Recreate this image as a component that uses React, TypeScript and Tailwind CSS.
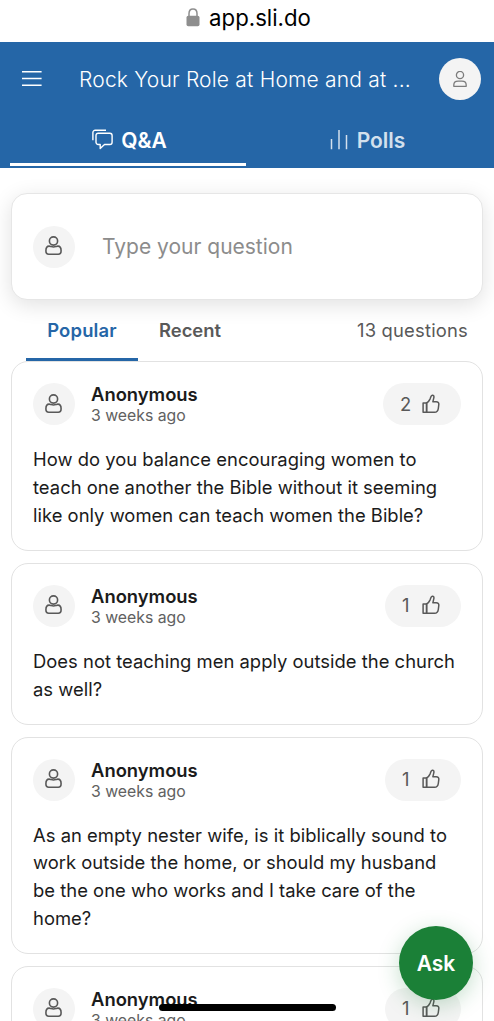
import React from 'react';
import clsx from 'clsx';

interface Question {
  id: number;
  author: string;
  time: string;
  votes: number;
  text: string;
}

const questions: Question[] = [
  {
    id: 1,
    author: 'Anonymous',
    time: '3 weeks ago',
    votes: 2,
    text: 'How do you balance encouraging women to teach one another the Bible without it seeming like only women can teach women the Bible?',
  },
  {
    id: 2,
    author: 'Anonymous',
    time: '3 weeks ago',
    votes: 1,
    text: 'Does not teaching men apply outside the church as well?',
  },
  {
    id: 3,
    author: 'Anonymous',
    time: '3 weeks ago',
    votes: 1,
    text: 'As an empty nester wife, is it biblically sound to work outside the home, or should my husband be the one who works and I take care of the home?',
  },
  {
    id: 4,
    author: 'Anonymous',
    time: '3 weeks ago',
    votes: 1,
    text: '',
  },
];

const LockIcon = () => (
  <svg width="14" height="19" viewBox="0 0 14 19" fill="none">
    <path d="M3 9V5.5C3 2.5 4.6.9 7 .9S11 2.5 11 5.5V9" stroke="#8e8e8e" strokeWidth="1.5" />
    <rect x="0.5" y="7.8" width="13" height="10.5" rx="1.8" fill="#8e8e8e" />
  </svg>
);

const MenuIcon = () => (
  <svg width="20" height="17" viewBox="0 0 20 17" stroke="#fff" strokeWidth="1.5">
    <path d="M0 .8h19.6M0 7.6h19.6M0 14.3h19.6" />
  </svg>
);

const ChatIcon = () => (
  <svg width="21" height="21" viewBox="0 0 21 21" fill="none" stroke="#fff" strokeWidth="1.4" strokeLinejoin="round">
    <path d="M14 1.2H3.200A2.300 2.300 0 0 0 .9 3.500v7.800" />
    <path d="M6.200 4.200h11.700a2.200 2.200 0 0 1 2.200 2.200v6.900a2.200 2.200 0 0 1-2.200 2.200h-5.400l-4.300 4v-4h-2A2.200 2.200 0 0 1 4 13.300V6.400a2.200 2.200 0 0 1 2.200-2.200Z" />
  </svg>
);

const PollsIcon = () => (
  <svg width="18" height="21" viewBox="0 0 18 21" stroke="#d3e0ed" strokeWidth="1.5">
    <path d="M1.5 10v10.200M9 1v19.200M16.500 6v14.200" />
  </svg>
);

const PersonIcon = () => (
  <svg width="18" height="20" viewBox="0 0 18 20" fill="none" stroke="#595959" strokeWidth="1.6" strokeLinejoin="round">
    <circle cx="8.500" cy="5" r="4.100" />
    <path d="M4.100 10.100c.9 0 1.400.3 2.100.5 1.500.5 3.100.5 4.600 0 .7-.2 1.200-.5 2.100-.5 2 0 3.200 1.700 3.200 4.700 0 2.500-.8 3.500-2.900 3.500H3.800c-2.100 0-2.900-1-2.900-3.500 0-3 1.200-4.700 3.200-4.700Z" />
  </svg>
);

const ProfileIcon = () => (
  <svg width="14" height="17" viewBox="0 0 14 17" fill="none" stroke="#7c7c7c" strokeWidth="1.3" strokeLinejoin="round">
    <circle cx="7" cy="4" r="3.600" />
    <path d="M.8 15.300v-1.400c0-2.300 1.900-3.800 4.300-3.800h3.800c2.400 0 4.300 1.500 4.300 3.800v1.400Z" />
  </svg>
);

const ThumbIcon = () => (
  <svg width="18" height="20" viewBox="0 0 18 20" fill="none" stroke="#595959" strokeWidth="1.5" strokeLinejoin="round">
    <path d="M1.100 9h3.500v9.300H1.100Z" />
    <path d="M4.600 9c1.700-1 2.700-2.300 3.400-3.900l1.100-2.900c.4-.9 1-1.200 1.700-1 1 .3 1.300 1.100 1.100 2.100l-1 4.400h3.300c1.900 0 2.800 1.100 2.600 2.800l-.5 4c-.3 2.600-1.600 3.800-3.800 3.800H4.600Z" />
  </svg>
);

const Avatar = () => (
  <div className="flex h-[42px] w-[42px] shrink-0 items-center justify-center rounded-full bg-[#f4f4f4] pb-px">
    <PersonIcon />
  </div>
);

const QuestionCard = ({ question }: { question: Question }) => (
  <article className="rounded-[17px] border border-[#e2e2e2] bg-white px-[21px] pt-[21px] pb-[21px]">
    <div className="flex h-[42px] items-start">
      <Avatar />
      <div className="ml-4 flex-1">
        <h2 className="text-[18.4px] leading-[22px] font-semibold text-[#1b1b1b]">{question.author}</h2>
        <p className="text-[15.8px] leading-[22px] text-[#616161]">{question.time}</p>
      </div>
      <button
        className={clsx(
          'flex h-[42px] items-center justify-between rounded-full bg-[#f4f4f4] pr-[21px] pl-[17px] text-[18.4px] text-[#595959]',
          question.votes > 1 ? 'w-[78px]' : 'w-[76px]',
        )}
      >
        <span>{question.votes}</span>
        <span className="mb-px">
          <ThumbIcon />
        </span>
      </button>
    </div>
    <p className="mt-[21px] text-[18.4px] leading-[27.65px] tracking-[0.02px] text-[#1b1b1b]">{question.text}</p>
  </article>
);

const App = () => {
  return (
    <div className="relative h-[1021px] w-[494px] overflow-hidden bg-white font-['Inter',sans-serif]">
      <div className="flex h-[42px] items-start justify-center gap-[9px] pt-[5px] pl-[3px]">
        <div className="mt-[3px]">
          <LockIcon />
        </div>
        <span className="text-[22.2px] leading-[26px] text-black">app.sli.do</span>
      </div>

      <header className="h-[126px] bg-[#2566a7] text-white">
        <div className="flex h-[74px] items-center pr-[13px] pl-[22px]">
          <MenuIcon />
          <h1 className="ml-[37px] flex-1 pt-px text-[21px] font-light tracking-[0.2px] whitespace-nowrap">Rock Your Role at Home and at ...</h1>
          <button className="flex h-[42px] w-[42px] items-center justify-center rounded-full bg-[#f4f4f4]">
            <ProfileIcon />
          </button>
        </div>
        <nav className="flex h-[50px] px-[10px] text-[21px] font-semibold">
          <button className="flex flex-1 items-center justify-center gap-[8px] border-b-3 border-white pt-[2px] pl-[3px]">
            <span className="mb-[3px]">
              <ChatIcon />
            </span>
            Q&amp;A
          </button>
          <button className="flex flex-1 items-center justify-center gap-[9px] border-b-3 border-transparent pt-[2px] pl-[5px] text-[#d3e0ed]">
            <span className="mb-[3px]">
              <PollsIcon />
            </span>
            Polls
          </button>
        </nav>
      </header>

      <main className="px-[11px] pt-[25px]">
        <div className="flex h-[107px] items-center rounded-[16px] border border-[#e6e6e6] bg-white px-[21px] shadow-[0_5px_21px_rgba(0,0,0,0.12)]">
          <Avatar />
          <span className="ml-[27px] text-[21px] text-[#8c8c8c]">Type your question</span>
        </div>

        <div className="flex h-[61.4px] items-stretch px-[15px] text-[18.4px]">
          <button className="w-[112px] rounded-t-[2px] border-b-3 border-[#2566a7] pt-[3px] font-semibold tracking-[0.2px] text-[#2566a7]">Popular</button>
          <button className="w-[104px] font-semibold text-[#595959]">Recent</button>
          <span className="ml-auto self-center tracking-[0.2px] text-[#595959]">13 questions</span>
        </div>

        <div className="flex flex-col gap-[11.5px]">
          {questions.map(question => (
            <QuestionCard key={question.id} question={question} />
          ))}
        </div>
      </main>

      <div className="absolute top-[1004px] left-[159px] h-[6.5px] w-[177px] rounded-full bg-black" />
      <button className="absolute top-[926px] left-[399px] h-[74px] w-[74px] rounded-full bg-[#1b8037] pt-px text-[21px] font-semibold text-white shadow-[0_5px_21px_rgba(27,128,55,0.25)]">
        Ask
      </button>
    </div>
  );
};

export default App;
